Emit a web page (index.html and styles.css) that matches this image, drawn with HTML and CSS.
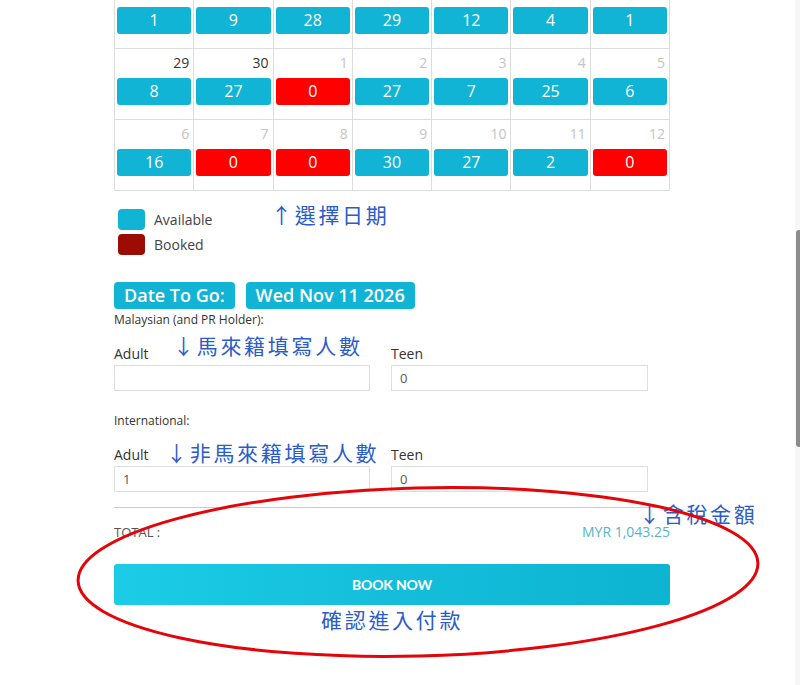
FILE: index.html
```html
<!DOCTYPE html>
<html lang="zh-Hant">
<head>
<meta charset="utf-8">
<title>Booking</title>
<link rel="stylesheet" href="styles.css">
</head>
<body>
<div class="page">
  <div class="calendar">
    <div class="cell"><span class="day">&nbsp;</span><span class="slot">1</span></div>
    <div class="cell"><span class="day">&nbsp;</span><span class="slot">9</span></div>
    <div class="cell"><span class="day">&nbsp;</span><span class="slot">28</span></div>
    <div class="cell"><span class="day">&nbsp;</span><span class="slot">29</span></div>
    <div class="cell"><span class="day">&nbsp;</span><span class="slot">12</span></div>
    <div class="cell"><span class="day">&nbsp;</span><span class="slot">4</span></div>
    <div class="cell"><span class="day">&nbsp;</span><span class="slot">1</span></div>

    <div class="cell"><span class="day">29</span><span class="slot">8</span></div>
    <div class="cell"><span class="day">30</span><span class="slot">27</span></div>
    <div class="cell"><span class="day other">1</span><span class="slot full">0</span></div>
    <div class="cell"><span class="day other">2</span><span class="slot">27</span></div>
    <div class="cell"><span class="day other">3</span><span class="slot">7</span></div>
    <div class="cell"><span class="day other">4</span><span class="slot">25</span></div>
    <div class="cell"><span class="day other">5</span><span class="slot">6</span></div>

    <div class="cell"><span class="day other">6</span><span class="slot">16</span></div>
    <div class="cell"><span class="day other">7</span><span class="slot full">0</span></div>
    <div class="cell"><span class="day other">8</span><span class="slot full">0</span></div>
    <div class="cell"><span class="day other">9</span><span class="slot">30</span></div>
    <div class="cell"><span class="day other">10</span><span class="slot">27</span></div>
    <div class="cell"><span class="day other">11</span><span class="slot">2</span></div>
    <div class="cell"><span class="day other">12</span><span class="slot full">0</span></div>
  </div>

  <div class="legend">
    <div class="legend-item"><span class="swatch available"></span><span>Available</span></div>
    <div class="legend-item"><span class="swatch booked"></span><span>Booked</span></div>
  </div>

  <div class="dates">
    <span class="date-badge">Date To Go:</span>
    <span class="date-badge">Wed Nov 11 2026</span>
  </div>

  <div class="group-title">Malaysian (and PR Holder):</div>
  <div class="fields">
    <div class="field">
      <label class="field-label">Adult</label>
      <input class="field-input" type="text" value="">
    </div>
    <div class="field">
      <label class="field-label">Teen</label>
      <input class="field-input" type="text" value="0">
    </div>
  </div>

  <div class="group-title intl">International:</div>
  <div class="fields">
    <div class="field">
      <label class="field-label">Adult</label>
      <input class="field-input" type="text" value="1">
    </div>
    <div class="field">
      <label class="field-label">Teen</label>
      <input class="field-input" type="text" value="0">
    </div>
  </div>

  <hr class="divider">

  <div class="total">
    <span class="total-label">TOTAL :</span>
    <span class="total-value">MYR 1,043.25</span>
  </div>

  <button class="book-btn" type="button">BOOK NOW</button>
</div>

<div class="note note-date">↑選擇日期</div>
<div class="note note-local">↓馬來籍填寫人數</div>
<div class="note note-intl">↓非馬來籍填寫人數</div>
<div class="note note-tax">↓含稅金額</div>
<div class="note note-pay">確認進入付款</div>

<svg class="circle" width="800" height="685" viewBox="0 0 800 685">
  <ellipse cx="418" cy="572" rx="340" ry="84" transform="rotate(-1.5 418 572)" fill="none" stroke="#e3050a" stroke-width="3"/>
</svg>

<div class="scroll-track"><div class="scroll-thumb"></div></div>
</body>
</html>
```

FILE: styles.css
```css
html, body {
  margin: 0;
  padding: 0;
  background: #ffffff;
  overflow: hidden;
}

body {
  font-family: "Open Sans", "Noto Sans", sans-serif;
  color: #333333;
  width: 800px;
  height: 685px;
}

.page {
  padding-left: 114px;
  width: 556px;
}

.calendar {
  margin-top: -23px;
  display: grid;
  grid-template-columns: repeat(7, 1fr);
  border-left: 1px solid #dcdcdc;
  border-top: 1px solid #dcdcdc;
}

.cell {
  display: flex;
  flex-direction: column;
  padding: 4px 2px 14px 2px;
  border-right: 1px solid #dcdcdc;
  border-bottom: 1px solid #dcdcdc;
}

.day {
  text-align: right;
  font-size: 14px;
  line-height: 20px;
  padding-right: 2px;
  color: #333333;
}

.day.other {
  color: #c4c4c4;
}

.slot {
  margin-top: 5px;
  height: 27px;
  line-height: 27px;
  border-radius: 3px;
  background: #11b4d4;
  color: #ffffff;
  text-align: center;
  font-size: 16px;
}

.slot.full {
  background: #ff0000;
}

.legend {
  margin-top: 18px;
  padding-left: 4px;
  display: flex;
  flex-direction: column;
  gap: 4px;
}

.legend-item {
  display: flex;
  align-items: center;
  gap: 9px;
  font-size: 14px;
  color: #444444;
}

.swatch {
  width: 27px;
  height: 21px;
  border-radius: 4px;
}

.swatch.available {
  background: #11b4d4;
}

.swatch.booked {
  background: #9a0c04;
}

.dates {
  margin-top: 27px;
  display: flex;
  gap: 11px;
}

.date-badge {
  display: inline-block;
  height: 27px;
  line-height: 27px;
  padding: 0 10px;
  border-radius: 4px;
  background: #11b4d4;
  color: #ffffff;
  font-size: 18px;
  font-weight: 600;
}

.group-title {
  margin-top: 3px;
  font-size: 12px;
  line-height: 16px;
  color: #333333;
}

.group-title.intl {
  margin-top: 22px;
}

.fields {
  display: grid;
  grid-template-columns: 256px 257px;
  column-gap: 21px;
  margin-top: 17px;
}

.field {
  display: flex;
  flex-direction: column;
}

.field-label {
  font-size: 14px;
  line-height: 18px;
  margin-bottom: 2px;
  color: #333333;
}

.field-input {
  box-sizing: border-box;
  height: 26px;
  width: 100%;
  border: 1px solid #dedede;
  padding: 0 8px;
  margin: 0;
  font-family: "Open Sans", sans-serif;
  font-size: 13px;
  color: #555555;
  background: #ffffff;
  outline: none;
}

.divider {
  margin: 15px 0 0 0;
  border: 0;
  border-top: 1px solid #cccccc;
  height: 0;
}

.total {
  margin-top: 16px;
  display: flex;
  justify-content: space-between;
  align-items: center;
  line-height: 16px;
}

.total-label {
  font-size: 13px;
  color: #555555;
}

.total-value {
  font-size: 14px;
  color: #56b4c4;
}

.book-btn {
  display: block;
  margin-top: 24px;
  width: 100%;
  height: 41px;
  border: 0;
  border-radius: 3px;
  background: linear-gradient(90deg, #1ccce6 0%, #14bedb 50%, #0db4d2 100%);
  color: #ffffff;
  font-family: "Lato", sans-serif;
  font-weight: 700;
  font-size: 14px;
  letter-spacing: -0.2px;
  cursor: pointer;
}

.note {
  position: absolute;
  font-family: "Noto Sans CJK TC", "Noto Sans CJK SC", sans-serif;
  font-size: 21px;
  line-height: 24px;
  letter-spacing: 2.7px;
  color: #2b5cc8;
  white-space: nowrap;
}

.note-date { left: 271px; top: 202px; }
.note-local { left: 173px; top: 333px; }
.note-intl { left: 166px; top: 440px; }
.note-tax { left: 639px; top: 501px; }
.note-pay { left: 321px; top: 607px; }

.circle {
  position: absolute;
  left: 0;
  top: 0;
  pointer-events: none;
}

.scroll-track {
  position: absolute;
  right: 0;
  top: 0;
  width: 5px;
  height: 685px;
  background: #f7f7f7;
}

.scroll-thumb {
  position: absolute;
  right: 0;
  top: 230px;
  width: 4px;
  height: 217px;
  background: #8c8c8c;
  border-radius: 3px 0 0 3px;
}
```
